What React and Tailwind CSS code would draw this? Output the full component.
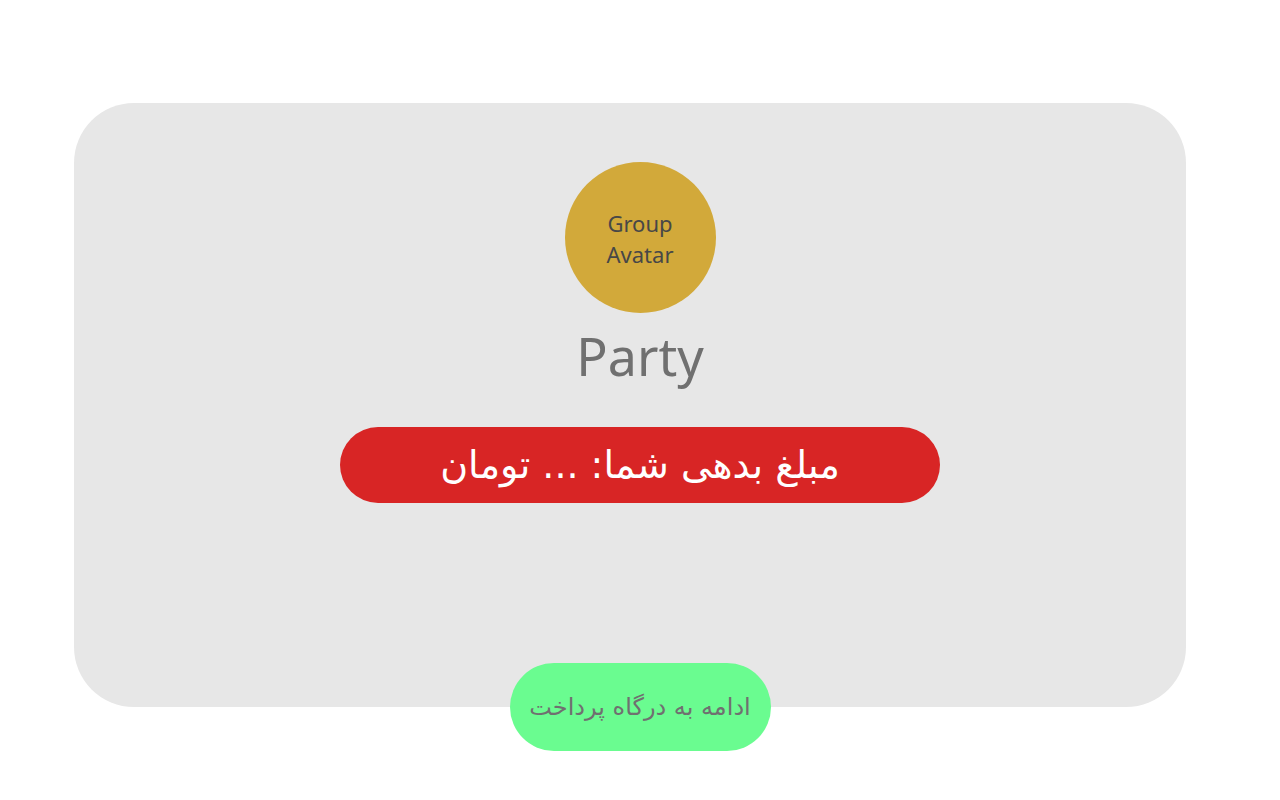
import React from 'react';

export default function App() {
    return (
        <div className="min-h-screen bg-white font-['Noto_Sans','DejaVu_Sans',sans-serif] flex flex-col items-center pt-[103px]">
            {/* Card */}
            <div className="self-start ml-[74px] w-[1112px] h-[604px] bg-[#e7e7e7] rounded-[60px] flex flex-col items-center pt-[59px]">
                <div className="translate-x-[10px] w-[151px] h-[151px] rounded-full bg-[#d2a93a] flex items-center justify-center text-center text-[22px] leading-[31px] pt-[3px] text-[#474747]">
                    Group<br />Avatar
                </div>
                <div className="translate-x-[10px] mt-[8px] text-[52px] leading-[70px] text-[#707070]">Party</div>
                <div
                    dir="rtl"
                    className="translate-x-[10px] mt-[36px] w-[600px] h-[76px] rounded-full bg-[#d82525] text-white flex items-center justify-center text-[38px] font-['DejaVu_Sans',sans-serif]"
                >
                    مبلغ بدهی شما: ... تومان
                </div>
            </div>

            {/* Pay button */}
            <button
                dir="rtl"
                className="-mt-[44px] w-[261px] h-[88px] rounded-full bg-[#6afc90] text-[#707070] text-[24px] font-['DejaVu_Sans',sans-serif] flex items-center justify-center"
            >
                ادامه به درگاه پرداخت
            </button>
        </div>
    );
}
